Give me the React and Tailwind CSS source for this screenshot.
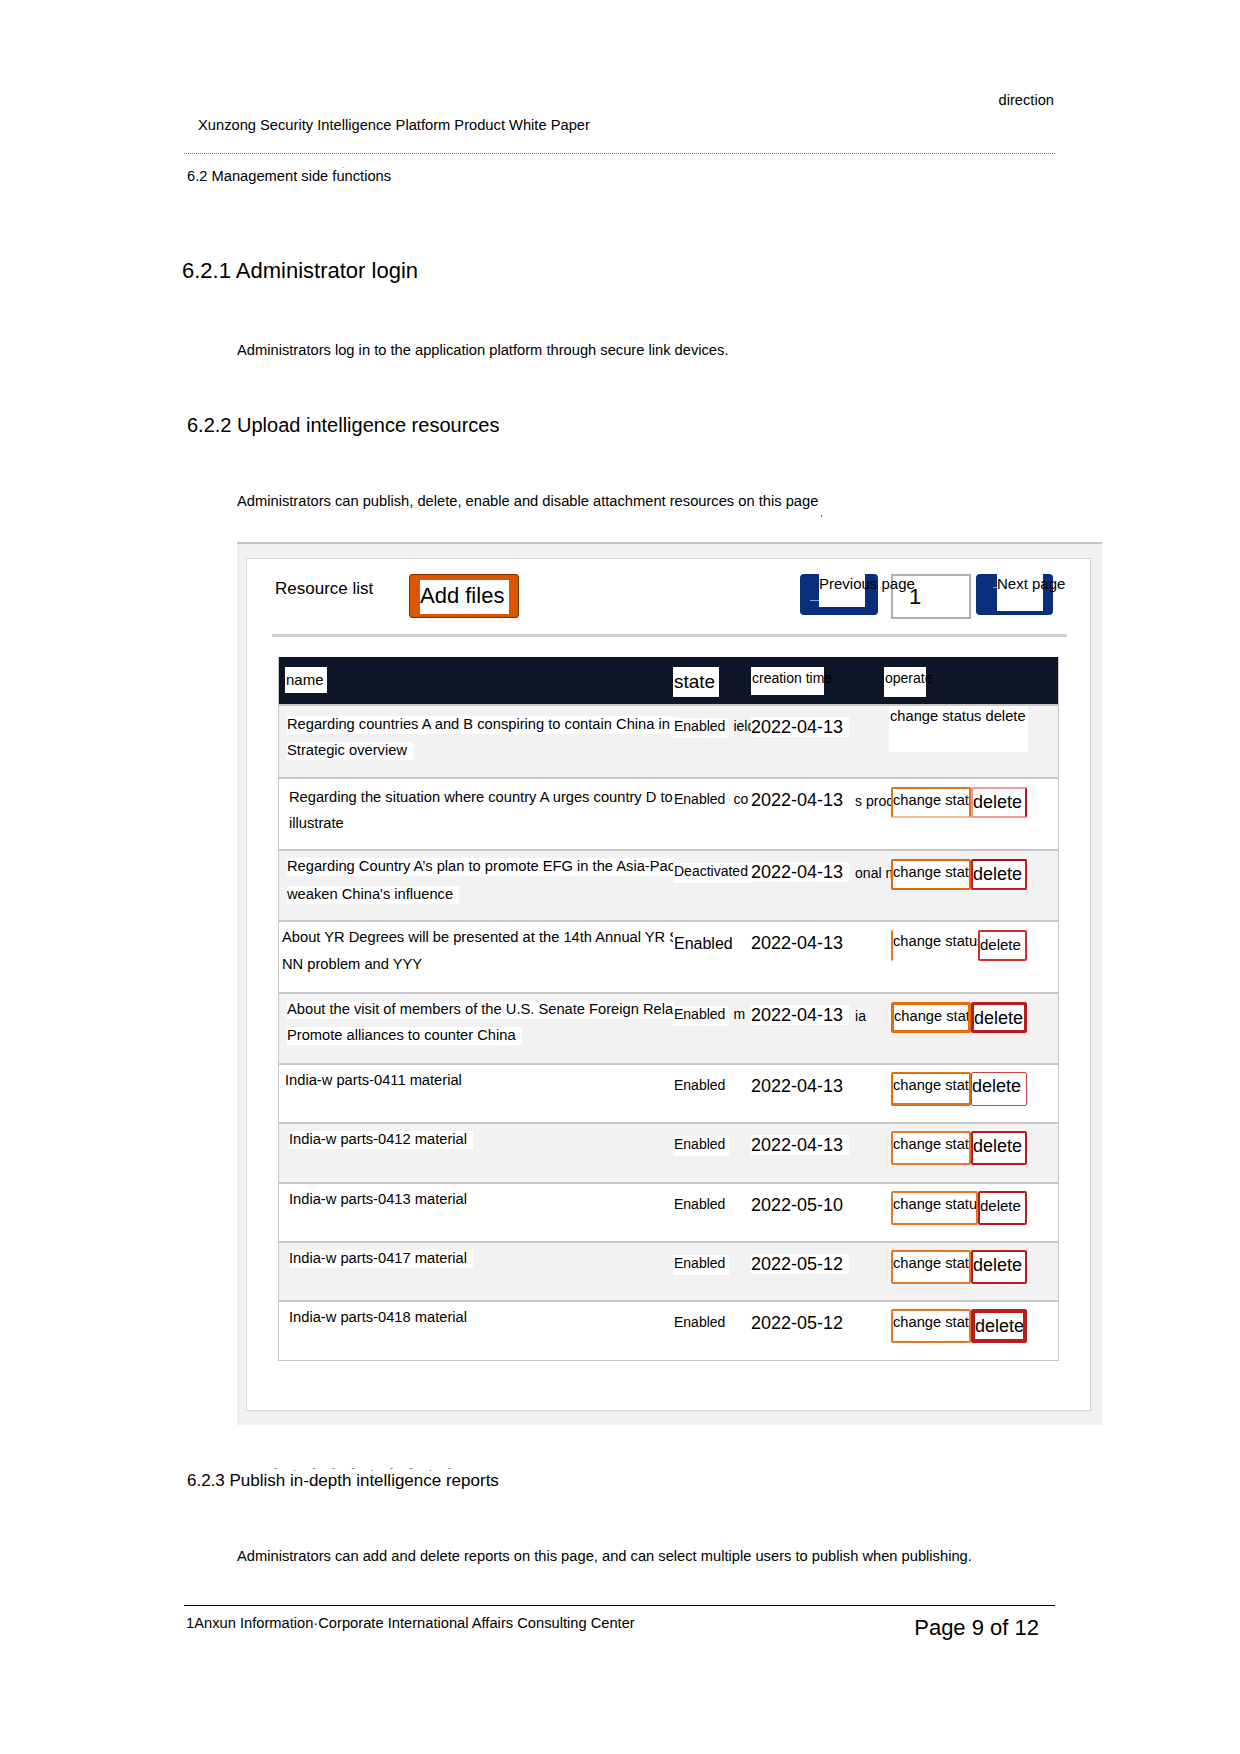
const rows = [
  {
    bg: 'bg-[#f2f2f2]', h: 'h-[73px]', pad: 'pl-[8px] pt-[5px] leading-[26px]',
    name: ['Regarding countries A and B conspiring to contain China in', 'Strategic overview'],
    state: 'Enabled', stateExtra: 'ield', date: '2022-04-13', op: 'text',
  },
  {
    bg: 'bg-white', h: 'h-[72px]', pad: 'pl-[10px] pt-[5px] leading-[26px]',
    name: ['Regarding the situation where country A urges country D to', 'illustrate'],
    state: 'Enabled', stateExtra: 'co', date: '2022-04-13', dateExtra: 's proc',
    orange: 'border-2 border-[#dd7420] border-b-[#f8c08f]',
    red: 'border-2 border-[#f29a9a] border-r-[#b01818]', delSize: 'text-[18px]',
    ow: 'w-[80px]', rw: 'w-[56px]',
  },
  {
    bg: 'bg-[#f2f2f2]', h: 'h-[71px]', pad: 'pl-[8px] pt-[1px] leading-[28px]',
    name: ['Regarding Country A’s plan to promote EFG in the Asia-Pac', 'weaken China\'s influence'],
    state: 'Deactivated', date: '2022-04-13', dateExtra: 'onal m',
    orange: 'border-2 border-[#d86a12]',
    red: 'border-2 border-[#c42020] border-t-[#a00f0f]', delSize: 'text-[18px]',
    ow: 'w-[80px]', rw: 'w-[56px]',
  },
  {
    bg: 'bg-white', h: 'h-[72px]', pad: 'pl-[3px] pt-[2px] leading-[27px]',
    name: ['About YR Degrees will be presented at the 14th Annual YR S', ' NN problem and YYY'],
    state: 'Enabled', stateSize: 'text-[16px]', date: '2022-04-13',
    orange: 'border-l-2 border-[#e07a2a]',
    red: 'border-2 border-[#c83030]', delSize: 'text-[15px]',
    ow: 'w-[87px]', rw: 'w-[49px]',
  },
  {
    bg: 'bg-[#f2f2f2]', h: 'h-[71px]', pad: 'pl-[8px] pt-[2px] leading-[26px]',
    name: ['About the visit of members of the U.S. Senate Foreign Relat', 'Promote alliances to counter China'],
    state: 'Enabled', stateSize: 'text-[13px] pt-[4px]', stateExtra: 'm', date: '2022-04-13', dateExtra: 'ia',
    orange: 'border-[3px] border-[#e26d0e]',
    red: 'border-[3px] border-[#b81c1c]', delSize: 'text-[18px]',
    ow: 'w-[80px]', rw: 'w-[56px]',
  },
  { bg: 'bg-white', h: 'h-[59px]', pad: 'pl-[6px] pt-[3px] leading-[25px]', name: ['India-w parts-0411 material'], state: 'Enabled', date: '2022-04-13', orange: 'border-2 border-b-[3px] border-[#e26d0e]', red: 'border border-[#d04040]', delSize: 'text-[18px]', ow: 'w-[80px]', rw: 'w-[56px]', small: true },
  { bg: 'bg-[#f2f2f2]', h: 'h-[60px]', pad: 'pl-[10px] pt-[3px] leading-[25px]', name: ['India-w parts-0412 material'], state: 'Enabled', date: '2022-04-13', orange: 'border-2 border-[#e07a2a]', red: 'border-2 border-[#b81c1c]', delSize: 'text-[18px]', ow: 'w-[80px]', rw: 'w-[56px]', small: true },
  { bg: 'bg-white', h: 'h-[59px]', pad: 'pl-[10px] pt-[3px] leading-[25px]', name: ['India-w parts-0413 material'], state: 'Enabled', date: '2022-05-10', orange: 'border-2 border-[#e07a2a]', red: 'border-2 border-[#b81c1c]', delSize: 'text-[15px]', ow: 'w-[87px]', rw: 'w-[49px]', small: true },
  { bg: 'bg-[#f2f2f2]', h: 'h-[59px]', pad: 'pl-[10px] pt-[3px] leading-[25px]', name: ['India-w parts-0417 material'], state: 'Enabled', date: '2022-05-12', orange: 'border-2 border-[#e07a2a]', red: 'border-2 border-[#b81c1c]', delSize: 'text-[18px]', ow: 'w-[80px]', rw: 'w-[56px]', small: true },
  { bg: 'bg-white', h: 'h-[60px]', pad: 'pl-[10px] pt-[3px] leading-[25px]', name: ['India-w parts-0418 material'], state: 'Enabled', date: '2022-05-12', orange: 'border-2 border-[#e07a2a]', red: 'border-[4px] border-[#b81c1c]', delSize: 'text-[18px]', ow: 'w-[80px]', rw: 'w-[56px]', small: true },
]

function Row({ r }) {
  return (
    <div className={`grid grid-cols-[394px_78px_136px_173px] border-t-2 border-[#c8c8c8] ${r.bg} ${r.h}`}>
      <div className={`overflow-hidden whitespace-nowrap text-[14.7px] ${r.pad}`}>
        {r.name.map((line, i) => (
          <div key={i}>
            <span className="bg-white pr-[6px] pb-[2px]">{line}</span>
          </div>
        ))}
      </div>
      <div className={`whitespace-nowrap pt-[10px] text-[14px] ${r.stateSize || ''}`}>
        <span className="bg-white pl-[1px] pr-[4px] pb-[4px]">{r.state}</span>
        {r.stateExtra && <span className="ml-[4px]">{r.stateExtra}</span>}
      </div>
      <div className="whitespace-nowrap pt-[8px]">
        <span className="bg-white pr-[6px] text-[18px]">{r.date}</span>
        {r.dateExtra && <span className="ml-[6px] text-[14px]">{r.dateExtra}</span>}
      </div>
      <div className={r.small ? 'pl-[4px] pt-[7px]' : 'pl-[4px] pt-[8px]'}>
        {r.op === 'text' ? (
          <div className="-ml-[2px] -mt-[8px] h-[46px] w-[139px] bg-white pl-[1px] text-[14.7px] leading-[20px]">
            change status delete
          </div>
        ) : (
          <div className={`flex ${r.small ? 'h-[34px]' : 'h-[31px]'}`}>
            <div className={`overflow-hidden whitespace-nowrap rounded-[2px] bg-white text-[14.7px] leading-[22px] ${r.ow} ${r.orange}`}>
              change status
            </div>
            <div className={`overflow-hidden whitespace-nowrap rounded-[2px] bg-white leading-[26px] ${r.rw} ${r.red} ${r.delSize}`}>
              delete
            </div>
          </div>
        )}
      </div>
    </div>
  )
}

export default function App() {
  return (
    <div className="relative h-[1754px] w-[1240px] bg-white font-['Liberation_Sans',Arial,sans-serif] text-black">
      <div className="ml-[182px] w-[873px] pt-[92px]">
        <div className="pr-[1px] text-right text-[14.7px] leading-[16px]">direction</div>
        <div className="mt-[9px] pl-[16px] text-[14.7px] leading-[16px]">
          Xunzong Security Intelligence Platform Product White Paper
        </div>
        <div className="ml-[2px] mt-[20px] border-t border-dotted border-[#777]" />
        <div className="relative mt-[14px] pl-[5px] text-[14.7px] leading-[16px]">
          <span className="absolute left-[160px] -top-[9px] text-[8px] text-[#888]">-</span>
          6.2 Management side functions
        </div>

        <div className="mt-[74px] text-[22px] leading-[26px]">6.2.1 Administrator login</div>
        <div className="mt-[58px] pl-[55px] text-[14.7px] leading-[16px]">
          Administrators log in to the application platform through secure link devices.
        </div>

        <div className="mt-[55px] pl-[5px] text-[20px] leading-[24px]">6.2.2 Upload intelligence resources</div>
        <div className="mt-[56px] pl-[55px] text-[14.7px] leading-[16px]">
          Administrators can publish, delete, enable and disable attachment resources on this page
          <span className="relative top-[10px] ml-[2px] text-[9px]">,</span>
        </div>

        <div className="ml-[55px] mt-[31px] w-[865px] border-t-2 border-[#c4c4c4] bg-[#f0f0f0] pb-[14px] pl-[9px] pr-[11px] pt-[14px]">
          <div className="border border-[#d4d4d4] bg-white pb-[49px] pt-[15px]">
            <div className="flex h-[44px] items-start">
              <div className="w-[162px] pl-[28px] pt-[4px] text-[17px] leading-[22px]">Resource list</div>
              <div className="h-[44px] w-[110px] rounded-[3px] border border-[#7a3000] bg-[#dd5500] pb-[3px] pl-[10px] pr-[9px] pt-[5px]">
                <div className="h-full bg-white text-[22px] leading-[32px]">Add files</div>
              </div>
              <div className="ml-auto mr-[37px] flex items-start">
                <div className="relative h-[41px] w-[78px] rounded-[4px] bg-[#0a2f7a]">
                  <div className="absolute left-[19px] top-0 h-[33px] w-[46px] bg-white" />
                  <div className="absolute left-[10px] top-[26px] h-[1px] w-[9px] bg-[#7aa6e0]" />
                  <div className="absolute left-[19px] top-[1px] z-10 whitespace-nowrap text-[15px] leading-[18px]">Previous page</div>
                </div>
                <div className="ml-[13px] h-[45px] w-[80px] border-2 border-[#b0b0b0] bg-white pl-[16px] pt-[9px] text-[22px] leading-[24px]">
                  1
                </div>
                <div className="relative ml-[5px] h-[41px] w-[77px] rounded-[4px] bg-[#0a2f7a]">
                  <div className="absolute left-[21px] top-0 h-[37px] w-[46px] bg-white" />
                  <div className="absolute left-[17px] top-[13px] h-[1px] w-[4px] bg-[#7aa6e0]" />
                  <div className="absolute left-[21px] top-[1px] z-10 whitespace-nowrap text-[15px] leading-[18px]">Next page</div>
                </div>
              </div>
            </div>
            <div className="ml-[25px] mr-[23px] mt-[16px] h-[3px] bg-[#cfcfcf]" />

            <div className="ml-[31px] mr-[31px] mt-[20px] border border-t-0 border-[#c8c8c8]">
              <div className="grid h-[47px] grid-cols-[394px_78px_136px_173px] bg-[#0d1626] pt-[10px]">
                <div className="pl-[6px]">
                  <span className="inline-block h-[26px] bg-white pl-[1px] pr-[3px] text-[15px] leading-[26px]">name</span>
                </div>
                <div>
                  <span className="inline-block h-[30px] bg-white pl-[1px] pr-[4px] text-[19px] leading-[30px]">state</span>
                </div>
                <div className="relative">
                  <span className="inline-block h-[28px] w-[73px] bg-white" />
                  <span className="absolute left-[1px] top-[1px] whitespace-nowrap text-[14px] leading-[20px]">creation time</span>
                </div>
                <div className="relative -ml-[3px]">
                  <span className="inline-block h-[30px] w-[42px] bg-white" />
                  <span className="absolute left-[1px] top-[1px] whitespace-nowrap text-[14px] leading-[20px]">operate</span>
                </div>
              </div>
              {rows.map((r, i) => (
                <Row key={i} r={r} />
              ))}
            </div>
          </div>
        </div>

        <div className="relative mt-[46px] pl-[5px] text-[17px] leading-[20px]">
          <span className="absolute left-[92px] -top-[13px] whitespace-nowrap text-[9px] tracking-[7px] text-[#555]">- . -  - - . - -  . -</span>
          6.2.3 Publish in-depth intelligence reports
        </div>
        <div className="mt-[57px] pl-[55px] text-[14.7px] leading-[16px]">
          Administrators can add and delete reports on this page, and can select multiple users to publish when publishing.
        </div>

        <div className="ml-[2px] mt-[41px] border-t border-black" />
        <div className="mt-[9px] flex items-start justify-between pl-[4px] pr-[16px]">
          <div className="text-[14.7px] leading-[16px]">1Anxun Information·Corporate International Affairs Consulting Center</div>
          <div className="mt-0 text-[22px] leading-[26px]">Page 9 of 12</div>
        </div>
      </div>
    </div>
  )
}
